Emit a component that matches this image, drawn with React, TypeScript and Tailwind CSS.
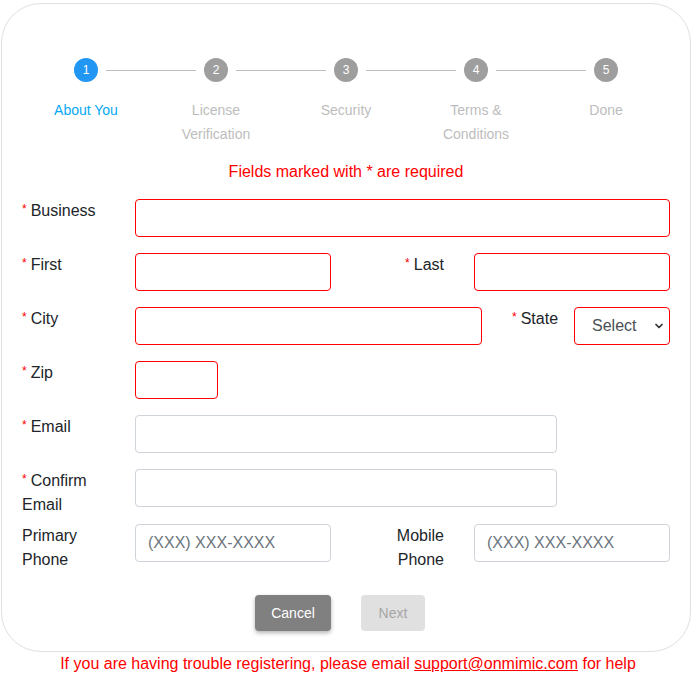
import { ChevronDown } from "lucide-react";

const steps = [
  { n: 1, label: ["About You"], active: true },
  { n: 2, label: ["License", "Verification"] },
  { n: 3, label: ["Security"] },
  { n: 4, label: ["Terms &", "Conditions"] },
  { n: 5, label: ["Done"] },
];

const Star = () => <span className="text-[#ff0000] text-[12px] align-top leading-[20px] mr-[4px]">*</span>;

const Label = ({ text, req, className = "" }: { text: React.ReactNode; req?: boolean; className?: string }) => (
  <div className={"text-[16px] leading-[24px] text-[#212529] " + className}>
    {req && <Star />}
    {text}
  </div>
);

const Field = ({ w, red, placeholder }: { w: string; red?: boolean; placeholder?: string }) => (
  <input
    placeholder={placeholder}
    className={
      "h-[38px] rounded-[4px] border px-3 text-[16px] text-[#495057] placeholder:text-[#6c757d] outline-none shrink-0 " +
      (red ? "border-[#ff0000] " : "border-[#ced4da] ") +
      w
    }
  />
);

export default function App() {
  return (
    <div className="w-[696px] h-[678px] bg-white font-['Liberation_Sans',Arial,sans-serif]">
      <div className="ml-px mt-[3px] w-[690px] h-[649px] rounded-[40px] border border-[#e0e0e0] px-[19px] pt-[54px]">
        {/* Stepper */}
        <div className="flex items-center pl-[53px]">
          {steps.map((s, i) => (
            <div key={s.n} className="flex items-center">
              <div
                className={
                  "w-6 h-6 rounded-full flex items-center justify-center text-white text-[12px] " +
                  (s.active ? "bg-[#2196f3]" : "bg-[#9e9e9e]")
                }
              >
                {s.n}
              </div>
              {i < steps.length - 1 && <div className="w-[90px] h-px bg-[#bdbdbd] mx-2" />}
            </div>
          ))}
        </div>
        <div className="grid grid-cols-5 mt-4">
          {steps.map((s) => (
            <div
              key={s.n}
              className={"text-center text-[14px] leading-[24px] " + (s.active ? "text-[#03a9f4]" : "text-[#bdbdbd]")}
            >
              {s.label.map((l) => (
                <div key={l}>{l}</div>
              ))}
            </div>
          ))}
        </div>

        <div className="text-center text-[#ff0000] text-[16px] leading-[24px] mt-[14px]">
          Fields marked with * are required
        </div>

        {/* Form */}
        <div className="flex flex-col gap-4 mt-[15px]">
          <div className="flex items-start h-[38px]">
            <Label req text="Business" className="w-[114px] shrink-0 pl-px" />
            <Field w="w-[535px]" red />
          </div>
          <div className="flex items-start h-[38px]">
            <Label req text="First" className="w-[114px] shrink-0 pl-px" />
            <Field w="w-[196px]" red />
            <Label req text="Last" className="w-[143px] shrink-0 text-right pr-[30px]" />
            <Field w="w-[196px]" red />
          </div>
          <div className="flex items-start h-[38px]">
            <Label req text="City" className="w-[114px] shrink-0 pl-px" />
            <Field w="w-[347px]" red />
            <Label req text="State" className="w-[62px] shrink-0 ml-[30px]" />
            <div className="relative w-[96px] shrink-0">
              <select className="appearance-none w-full h-[38px] rounded-[4px] border border-[#ff0000] pl-[17px] text-[16px] text-[#495057] bg-white outline-none">
                <option>Select</option>
              </select>
              <ChevronDown
                size={12}
                strokeWidth={3.5}
                className="absolute right-[5px] top-[13px] text-[#333] pointer-events-none"
              />
            </div>
          </div>
          <div className="flex items-start h-[38px]">
            <Label req text="Zip" className="w-[114px] shrink-0 pl-px" />
            <Field w="w-[83px]" red />
          </div>
          <div className="flex items-start h-[38px]">
            <Label req text="Email" className="w-[114px] shrink-0 pl-px" />
            <Field w="w-[422px]" />
          </div>
          <div className="flex items-start h-[38px]">
            <Label
              req
              text={
                <>
                  Confirm
                  <br />
                  Email
                </>
              }
              className="w-[114px] shrink-0 pl-px"
            />
            <Field w="w-[422px]" />
          </div>
          <div className="flex items-start h-[38px] mt-px">
            <Label
              text={
                <>
                  Primary
                  <br />
                  Phone
                </>
              }
              className="w-[114px] shrink-0 pl-px"
            />
            <Field w="w-[196px]" placeholder="(XXX) XXX-XXXX" />
            <Label
              text={
                <>
                  Mobile
                  <br />
                  Phone
                </>
              }
              className="w-[143px] shrink-0 text-right pr-[30px]"
            />
            <Field w="w-[196px]" placeholder="(XXX) XXX-XXXX" />
          </div>
        </div>

        {/* Actions */}
        <div className="flex justify-center gap-[30px] mt-[33px] pr-[12px]">
          <button className="w-[76px] h-[36px] rounded-[4px] bg-[#808080] text-white text-[14px] shadow-[0_2px_4px_rgba(0,0,0,0.3)]">
            Cancel
          </button>
          <button className="w-[64px] h-[36px] rounded-[4px] bg-[#e0e0e0] text-[#a6a6a6] text-[14px]">
            Next
          </button>
        </div>
      </div>

      <div className="text-center text-[#ff0000] text-[16px] leading-[24px]">
        If you are having trouble registering, please email{" "}
        <span className="underline">support@onmimic.com</span> for help
      </div>
    </div>
  );
}
